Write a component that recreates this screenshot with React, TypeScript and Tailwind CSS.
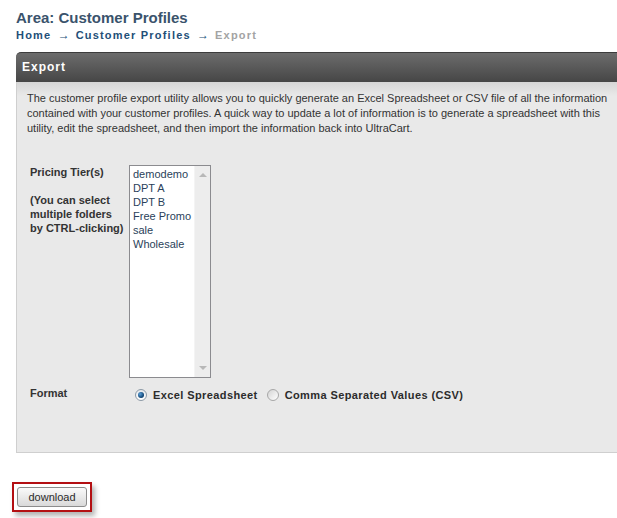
import { useState } from "react";

const tiers = ["demodemo", "DPT A", "DPT B", "Free Promo", "sale", "Wholesale"];

function Radio({ checked }: { checked: boolean }) {
    return checked ? (
        <span className="flex h-[12px] w-[12px] items-center justify-center rounded-full border border-[#8d9aa6] bg-[linear-gradient(#e4e8ec,#ffffff)]">
            <span className="h-[6px] w-[6px] rounded-full bg-[radial-gradient(circle_at_35%_35%,#5a9fd8,#0c3f6e_70%)]" />
        </span>
    ) : (
        <span className="h-[12px] w-[12px] rounded-full border border-[#a7a7a7] bg-[linear-gradient(135deg,#d4d4d4,#ffffff)]" />
    );
}

function Arrow() {
    return <span className="ml-[2px] mr-[6px] font-['Liberation_Serif',serif] text-[12px] font-normal tracking-normal">→</span>;
}

export default function App() {
    const [format, setFormat] = useState<"xls" | "csv">("xls");

    return (
        <div className="h-[518px] w-[617px] overflow-hidden bg-white font-['Liberation_Sans',Arial,sans-serif] text-[11px] text-[#333]">
            <div className="pl-4 pt-[9px]">
                <h1 className="text-[15px] font-bold leading-[18px] text-[#3a536c]">Area: Customer Profiles</h1>
                <div className="mt-[1px] text-[11px] font-bold leading-[14px] tracking-[1.2px] text-[#234f78]">
                    Home <Arrow />
                    Customer Profiles <Arrow />
                    <span className="text-[#a3a3a3]">Export</span>
                </div>
            </div>

            <div className="ml-4 mt-[10px] w-[615px]">
                <div className="flex h-[30px] items-center rounded-tl-[5px] border-t border-[#3c3c3c] bg-[linear-gradient(#6c6c6c,#464646)] pl-[6px] pb-[2px] text-[12px] font-bold tracking-[1px] text-white">
                    Export
                </div>
                <div className="h-[371px] border-b border-l border-[#cfcfcf] bg-[linear-gradient(#d6d6d6,#e9e9e9_14px,#e9e9e9)] px-[10px] pt-[9px]">
                    <p className="w-[590px] leading-[15px] text-[#333]">
                        The customer profile export utility allows you to quickly generate an Excel Spreadsheet or CSV file of all the information contained with your customer profiles. A quick way to update a lot of information is to generate a spreadsheet with this utility, edit the spreadsheet, and then import the information back into UltraCart.
                    </p>

                    <div className="ml-[3px] mt-[29px] grid grid-cols-[99px_1fr] gap-y-[8px] leading-[14px]">
                        <div className="whitespace-nowrap font-bold">
                            Pricing Tier(s)
                            <br />
                            <br />
                            (You can select
                            <br />
                            multiple folders
                            <br />
                            by CTRL-clicking)
                        </div>
                        <div className="flex h-[213px] w-[82px] border border-[#8b8b8f] bg-white">
                            <ul className="flex-1 pl-[3px] pt-[1px] text-[#2a3f5a]">
                                {tiers.map((t) => (
                                    <li key={t} className="whitespace-nowrap">
                                        {t}
                                    </li>
                                ))}
                            </ul>
                            <div className="flex w-[16px] flex-col items-center justify-between border-l border-[#f4f4f4] bg-[#ededed] py-[7px]">
                                <span className="h-0 w-0 border-x-[4px] border-b-[4px] border-x-transparent border-b-[#b8b8b8]" />
                                <span className="h-0 w-0 border-x-[4px] border-t-[4px] border-x-transparent border-t-[#b8b8b8]" />
                            </div>
                        </div>

                        <div className="font-bold">Format</div>
                        <div className="flex items-center pt-[2px] font-bold text-[#2c2c2c]">
                            <label className="ml-[6px] flex cursor-pointer items-center" onClick={() => setFormat("xls")}>
                                <Radio checked={format === "xls"} />
                                <span className="ml-[6px] tracking-[0.4px]">Excel Spreadsheet</span>
                            </label>
                            <label className="ml-[9px] flex cursor-pointer items-center" onClick={() => setFormat("csv")}>
                                <Radio checked={format === "csv"} />
                                <span className="ml-[6px] tracking-[0.4px]">Comma Separated Values (CSV)</span>
                            </label>
                        </div>
                    </div>
                </div>
            </div>

            <div className="ml-[12px] mt-[29px] inline-block border-2 border-[#b30f12] p-[3px] shadow-[3px_4px_5px_rgba(0,0,0,0.3)]">
                <button className="h-[20px] w-[70px] rounded-[3px] border border-[#8c8c8c] bg-[linear-gradient(#fafafa,#d9d9d9)] text-[11px] leading-[18px] text-[#2b2b2b]">
                    download
                </button>
            </div>
        </div>
    );
}
